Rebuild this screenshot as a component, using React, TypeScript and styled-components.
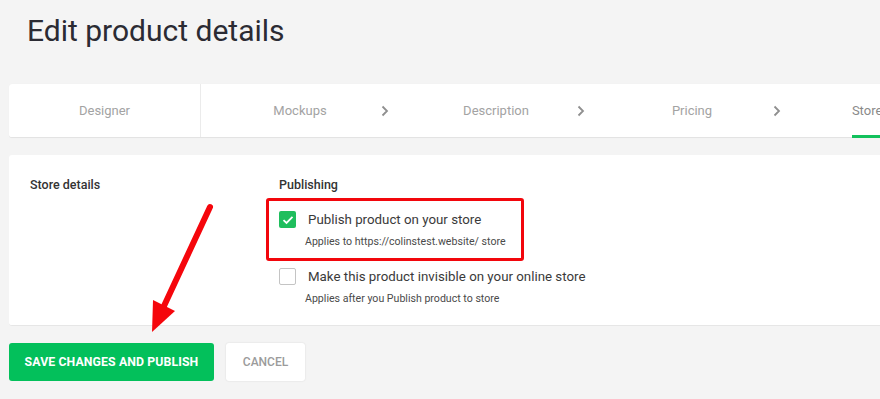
import React from "react";
import styled, { createGlobalStyle } from "styled-components";

const Global = createGlobalStyle`
  html, body { margin: 0; padding: 0; background: #f4f4f4; }
  body { font-family: Roboto, "Liberation Sans", Arial, sans-serif; }
  * { box-sizing: border-box; }
`;

const Page = styled.div`
  position: relative;
  width: 880px;
  height: 399px;
  overflow: hidden;
  background: #f4f4f4;
  padding: 0 0 0 9px;
`;

const Title = styled.h1`
  margin: 0;
  padding: 13px 0 0 18px;
  height: 84px;
  font-size: 30px;
  line-height: 36px;
  font-weight: 400;
  color: #2b2b33;
`;

const TabCard = styled.div`
  display: flex;
  width: 1000px;
  height: 54px;
  background: #fff;
  border-radius: 3px 0 0 3px;
  border-bottom: 1px solid #e3e3e3;
  box-shadow: 0 0 1px rgba(0, 0, 0, 0.06);
`;

const FirstTab = styled.div`
  flex: 0 0 192px;
  display: flex;
  align-items: center;
  justify-content: center;
  border-right: 1px solid #ebebeb;
  font-size: 13px;
  color: #a3a3a3;
`;

const Step = styled.div`
  flex: 0 0 196px;
  display: flex;
  align-items: stretch;
`;

const StepLabel = styled.div<{ $active?: boolean }>`
  position: relative;
  flex: 0 0 146px;
  margin-left: 26px;
  display: flex;
  align-items: center;
  justify-content: center;
  font-size: 13px;
  white-space: nowrap;
  color: ${(p) => (p.$active ? "#8a8a8a" : "#a3a3a3")};
`;

const Underline = styled.span`
  position: absolute;
  left: 37px;
  right: 37px;
  bottom: -1px;
  height: 3px;
  background: #12c15c;
`;

const Chevron = styled.div`
  flex: 0 0 24px;
  display: flex;
  align-items: center;
  justify-content: center;
  padding-top: 1px;
`;

const DetailsCard = styled.div`
  display: flex;
  margin-top: 17px;
  width: 1000px;
  height: 171px;
  background: #fff;
  border-radius: 3px 0 0 3px;
  border-bottom: 1px solid #e6e6e6;
  padding: 22px 0 0 21px;
`;

const SectionName = styled.div`
  flex: 0 0 249px;
  font-size: 12.5px;
  font-weight: 500;
  line-height: 16px;
  color: #333;
`;

const Column = styled.div`
  display: flex;
  flex-direction: column;
`;

const ColumnHeading = styled.div`
  font-size: 12.5px;
  font-weight: 500;
  line-height: 16px;
  color: #333;
  margin-bottom: 18px;
`;

const Option = styled.div`
  display: grid;
  grid-template-columns: 29px auto;
  row-gap: 7px;
  margin-bottom: 19px;
`;

const Box = styled.span<{ $checked?: boolean }>`
  width: 17px;
  height: 17px;
  border-radius: 2px;
  display: flex;
  align-items: center;
  justify-content: center;
  background: ${(p) => (p.$checked ? "#1fbe5d" : "#fff")};
  border: ${(p) => (p.$checked ? "none" : "1.5px solid #c4c4c4")};
`;

const OptionLabel = styled.span`
  font-size: 13.3px;
  line-height: 17px;
  color: #3a3a3a;
`;

const OptionHint = styled.span`
  grid-column: 2;
  margin-left: -3px;
  font-size: 10.6px;
  line-height: 14px;
  color: #4a4a4a;
`;

const Actions = styled.div`
  display: flex;
  gap: 12px;
  margin-top: 17px;
`;

const PrimaryButton = styled.button`
  height: 38px;
  width: 205px;
  border: none;
  border-radius: 3px;
  background: #03c05b;
  color: #fff;
  font-family: inherit;
  font-size: 12.3px;
  font-weight: 700;
  letter-spacing: 0.1px;
  padding: 0;
`;

const SecondaryButton = styled.button`
  height: 38px;
  width: 79px;
  border: none;
  border-radius: 3px;
  background: #fff;
  color: #9b9b9b;
  font-family: inherit;
  font-size: 12px;
  font-weight: 500;
  box-shadow: 0 0 2px rgba(0, 0, 0, 0.12);
  padding: 0;
`;

const Highlight = styled.div`
  position: absolute;
  left: 266px;
  top: 198px;
  width: 258px;
  height: 63px;
  border: 3px solid #f2060c;
  border-radius: 3px;
  pointer-events: none;
`;

const Annotation = styled.svg`
  position: absolute;
  left: 0;
  top: 0;
  pointer-events: none;
`;

const ChevronIcon = () => (
  <svg width="8" height="12" viewBox="0 0 8 12">
    <path d="M1.5 1.5 L6 6 L1.5 10.5" fill="none" stroke="#8f8f8f" strokeWidth="1.8" />
  </svg>
);

const Check = () => (
  <svg width="12" height="10" viewBox="0 0 12 10">
    <path d="M1.5 5.2 L4.5 8 L10.5 1.8" fill="none" stroke="#fff" strokeWidth="1.8" />
  </svg>
);

const steps = ["Mockups", "Description", "Pricing"];

export default function App() {
  return (
    <Page>
      <Global />
      <Title>Edit product details</Title>
      <TabCard>
        <FirstTab>Designer</FirstTab>
        {steps.map((s) => (
          <Step key={s}>
            <StepLabel>{s}</StepLabel>
            <Chevron>
              <ChevronIcon />
            </Chevron>
          </Step>
        ))}
        <Step>
          <StepLabel $active>
            Store details
            <Underline />
          </StepLabel>
        </Step>
      </TabCard>
      <DetailsCard>
        <SectionName>Store details</SectionName>
        <Column>
          <ColumnHeading>Publishing</ColumnHeading>
          <Option>
            <Box $checked>
              <Check />
            </Box>
            <OptionLabel>Publish product on your store</OptionLabel>
            <OptionHint>Applies to https://colinstest.website/ store</OptionHint>
          </Option>
          <Option>
            <Box />
            <OptionLabel>Make this product invisible on your online store</OptionLabel>
            <OptionHint>Applies after you Publish product to store</OptionHint>
          </Option>
        </Column>
      </DetailsCard>
      <Actions>
        <PrimaryButton>SAVE CHANGES AND PUBLISH</PrimaryButton>
        <SecondaryButton>CANCEL</SecondaryButton>
      </Actions>
      <Highlight />
      <Annotation width="880" height="399" viewBox="0 0 880 399">
        <line x1="210" y1="207" x2="164" y2="306" stroke="#f5060c" strokeWidth="6" strokeLinecap="round" />
        <polygon points="152,332 153,300 175,311" fill="#f5060c" />
      </Annotation>
    </Page>
  );
}
